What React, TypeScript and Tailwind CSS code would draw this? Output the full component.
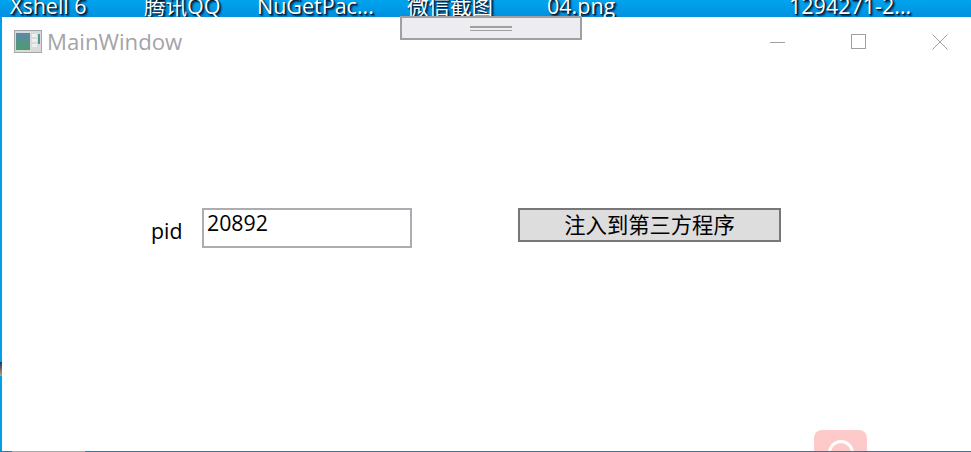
export default function App() {
  const labels: [string, string][] = [
    ["Xshell 6", "w-[134px]"],
    ["腾讯QQ", "w-[113px]"],
    ["NuGetPac...", "w-[150px]"],
    ["微信截图", "w-[140px]"],
    ["04.png", "w-[242px]"],
    ["1294271-2...", "w-[150px]"],
  ];
  return (
    <div className="relative flex h-[452px] w-[971px] flex-col overflow-hidden bg-white font-['Open_Sans','Noto_Sans_CJK_SC',sans-serif]">
      <div className="flex h-[17px] shrink-0 items-end overflow-hidden bg-gradient-to-b from-[#00a4ee] to-[#0090e0] pl-[10px]">
        {labels.map(([t, w]) => (
          <div
            key={t}
            className={`${w} shrink-0 whitespace-nowrap text-[21.5px] leading-[24px] mb-[-1px] text-white [text-shadow:1px_1px_1px_#001830,2px_2px_2px_#00204a]`}
          >
            {t}
          </div>
        ))}
      </div>

      <div className="flex min-h-0 flex-1">
        <div className="w-[2px] shrink-0 bg-[#00a0e8]" />
        <div className="flex min-w-0 flex-1 flex-col">
          <div className="flex h-[49px] shrink-0 items-center justify-between">
            <div className="ml-[12px] flex items-center gap-[5px]">
              <svg width="28" height="23" viewBox="0 0 28 23">
                <rect x="0.5" y="0.5" width="27" height="22" fill="#d8dadb" stroke="#a4a6a8" />
                <defs>
                  <linearGradient id="g" x1="0" y1="0" x2="0" y2="1">
                    <stop offset="0" stopColor="#5a8aa8" />
                    <stop offset="1" stopColor="#4f9a6c" />
                  </linearGradient>
                </defs>
                <rect x="2" y="3" width="14" height="17" fill="url(#g)" />
                <rect x="18" y="4" width="5" height="3" fill="#eef0f0" />
                <rect x="18" y="9" width="5" height="3" fill="#eef0f0" />
                <rect x="18" y="14" width="5" height="3" fill="#eef0f0" />
                <rect x="24" y="4" width="2" height="10" fill="#4f9a8c" />
              </svg>
              <span className="pt-[2px] text-[22.2px] leading-none text-[#a3a3a8]">MainWindow</span>
            </div>
            <div className="flex items-center">
              <svg width="16" height="16" viewBox="0 0 16 16" className="mr-[65px]">
                <path d="M0 8.5H15" stroke="#a0a0a0" />
              </svg>
              <svg width="16" height="16" viewBox="0 0 16 16" className="mr-[65px]">
                <rect x="0.5" y="0.5" width="14" height="14" fill="none" stroke="#a0a0a0" />
              </svg>
              <svg width="16" height="16" viewBox="0 0 16 16" className="mr-[23px]">
                <path d="M0.5 0.5L15.5 15.5M15.5 0.5L0.5 15.5" stroke="#a0a0a0" />
              </svg>
            </div>
          </div>

          <div className="mt-[142px] flex items-start">
            <span className="ml-[149px] mt-[8px] w-[51px] text-[21.3px] leading-[30px] text-black">pid</span>
            <input
              readOnly
              value="20892"
              className="h-[40px] w-[210px] border-2 border-[#abadb3] bg-white px-[3px] pb-[12px] text-[21.3px] leading-[26px] text-black outline-none"
            />
            <button className="ml-[106px] h-[34px] w-[263px] border-2 border-[#777777] bg-[#dddddd] text-[21.3px] leading-none text-black">
              注入到第三方程序
            </button>
          </div>
        </div>
      </div>

      <div className="flex h-px shrink-0">
        <div className="w-[12px] bg-[#2a7ca8]" />
        <div className="w-[73px] bg-[#a8a8a8]" />
        <div className="flex-1 bg-[#2f7a9e]" />
      </div>

      <div className="absolute left-[400px] top-[16px] flex h-[24px] w-[182px] flex-col items-center justify-center gap-[2px] border-2 border-[#a0a0a0] bg-[#edecf1]">
        <div className="h-[2px] w-[42px] bg-[#a0a0a0]" />
        <div className="h-px w-[42px] bg-[#a0a0a0]" />
      </div>

      <div className="absolute left-0 top-[362px] h-[14px] w-[2px] bg-gradient-to-b from-[#10385a] to-[#c8a070]" />

      <div className="absolute bottom-[1px] left-[814px] flex h-[21px] w-[53px] justify-center overflow-hidden rounded-t-[8px] bg-[#fdc9c9]">
        <div className="mt-[10px] h-[26px] w-[26px] shrink-0 rounded-full border-[3px] border-white" />
      </div>
    </div>
  );
}
